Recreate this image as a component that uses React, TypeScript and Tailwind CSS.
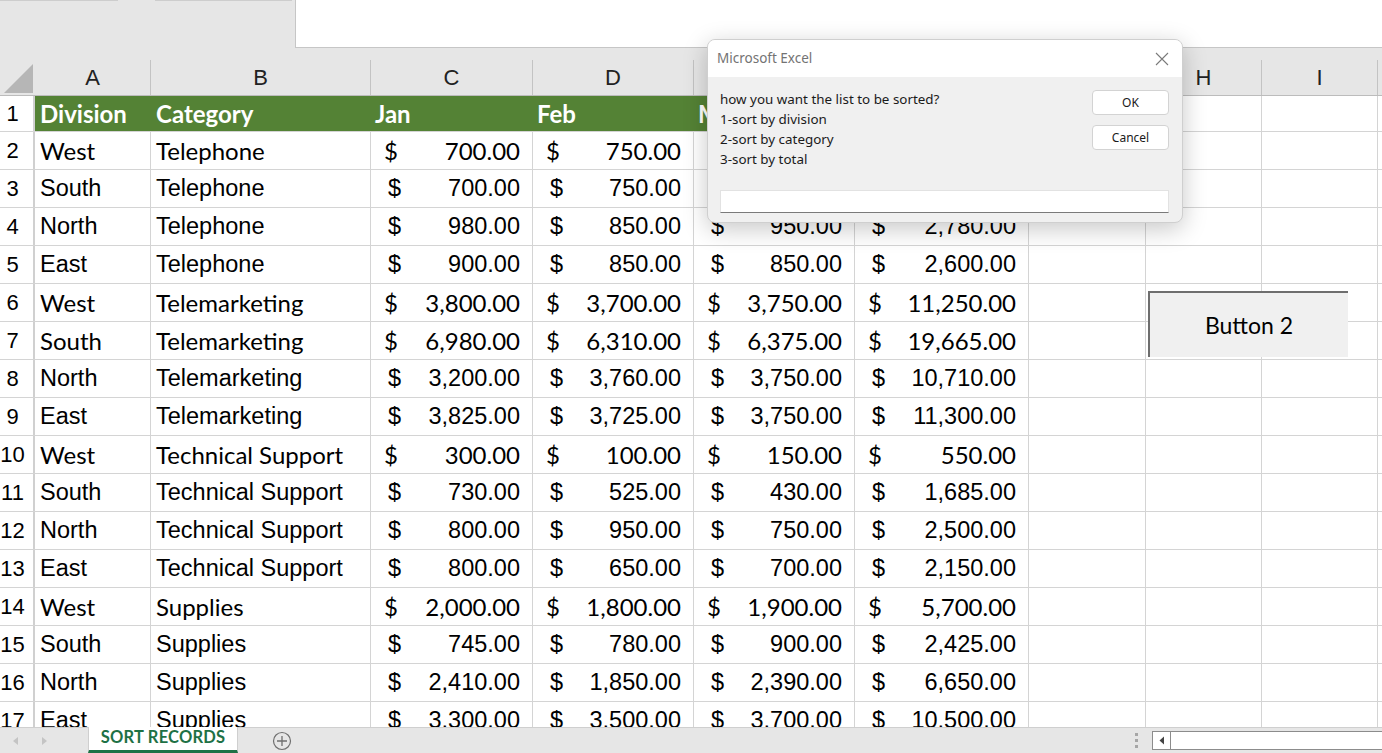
import React from 'react';

// column widths in px (border included)
const COLS = [
  { key: 'A', w: 'w-[116px]' },
  { key: 'B', w: 'w-[220px]' },
  { key: 'C', w: 'w-[162px]' },
  { key: 'D', w: 'w-[161px]' },
  { key: 'E', w: 'w-[161px]' },
  { key: 'F', w: 'w-[174px]' },
  { key: 'G', w: 'w-[117px]' },
  { key: 'H', w: 'w-[116px]' },
  { key: 'I', w: 'w-[116px]' },
];

type Row = { n: number; div: string; cat: string; vals: string[]; calibri?: boolean };

const rows: Row[] = [
  { n: 2, div: 'West', cat: 'Telephone', vals: ['700.00', '750.00', '650.00', '2,100.00'], calibri: true },
  { n: 3, div: 'South', cat: 'Telephone', vals: ['700.00', '750.00', '800.00', '2,250.00'] },
  { n: 4, div: 'North', cat: 'Telephone', vals: ['980.00', '850.00', '950.00', '2,780.00'] },
  { n: 5, div: 'East', cat: 'Telephone', vals: ['900.00', '850.00', '850.00', '2,600.00'] },
  { n: 6, div: 'West', cat: 'Telemarketing', vals: ['3,800.00', '3,700.00', '3,750.00', '11,250.00'], calibri: true },
  { n: 7, div: 'South', cat: 'Telemarketing', vals: ['6,980.00', '6,310.00', '6,375.00', '19,665.00'], calibri: true },
  { n: 8, div: 'North', cat: 'Telemarketing', vals: ['3,200.00', '3,760.00', '3,750.00', '10,710.00'] },
  { n: 9, div: 'East', cat: 'Telemarketing', vals: ['3,825.00', '3,725.00', '3,750.00', '11,300.00'] },
  { n: 10, div: 'West', cat: 'Technical Support', vals: ['300.00', '100.00', '150.00', '550.00'], calibri: true },
  { n: 11, div: 'South', cat: 'Technical Support', vals: ['730.00', '525.00', '430.00', '1,685.00'] },
  { n: 12, div: 'North', cat: 'Technical Support', vals: ['800.00', '950.00', '750.00', '2,500.00'] },
  { n: 13, div: 'East', cat: 'Technical Support', vals: ['800.00', '650.00', '700.00', '2,150.00'] },
  { n: 14, div: 'West', cat: 'Supplies', vals: ['2,000.00', '1,800.00', '1,900.00', '5,700.00'], calibri: true },
  { n: 15, div: 'South', cat: 'Supplies', vals: ['745.00', '780.00', '900.00', '2,425.00'] },
  { n: 16, div: 'North', cat: 'Supplies', vals: ['2,410.00', '1,850.00', '2,390.00', '6,650.00'] },
  { n: 17, div: 'East', cat: 'Supplies', vals: ['3,300.00', '3,500.00', '3,700.00', '10,500.00'] },
];

const ARIAL = "font-['Liberation_Sans',Arial,sans-serif] text-[23.5px]";
const CALIBRI = "font-['Lato',sans-serif] text-[24px]";
const CELL = 'h-full shrink-0 border-r border-[#d4d4d4] flex items-center overflow-hidden whitespace-nowrap';

const RowNum: React.FC<{ n: number }> = ({ n }) => (
  <div className="w-[35px] h-full shrink-0 border-r-2 border-[#d0d0d0] flex items-center font-['Liberation_Sans',Arial,sans-serif] text-[22px] text-black">
    <span className="w-[25px] text-center">{n}</span>
  </div>
);

const Money: React.FC<{ v: string; w: string; calibri?: boolean }> = ({ v, w, calibri }) => (
  <div className={`${CELL} ${w} justify-between pr-[12px] ${calibri ? 'pl-[13px]' : 'pl-[17px]'}`}>
    <span>$</span>
    <span>{v}</span>
  </div>
);

const Dialog: React.FC = () => (
  <div className="absolute left-[707px] top-[39px] w-[476px] h-[184px] rounded-[8px] overflow-hidden border border-[#cfcfcf] bg-[#f0f0f0] shadow-[0_6px_24px_rgba(0,0,0,0.22)] font-['Noto_Sans',sans-serif]">
    <div className="h-[37px] bg-white flex items-center justify-between pl-[9px] pr-[13px]">
      <span className="text-[13.5px] text-[#737373]">Microsoft Excel</span>
      <svg width="14" height="14" viewBox="0 0 14 14">
        <path d="M1 1 L13 13 M13 1 L1 13" stroke="#7a7a7a" strokeWidth="1.1" />
      </svg>
    </div>
    <div className="flex pl-[12px] pr-[13px] pt-[13px]">
      <div className="flex-1 text-[13.4px] leading-[20px] text-[#1a1a1a] -mt-[1px]">
        <div>how you want the list to be sorted?</div>
        <div>1-sort by division</div>
        <div>2-sort by category</div>
        <div>3-sort by total</div>
      </div>
      <div className="flex flex-col gap-[10px]">
        <button className="w-[77px] h-[25px] bg-white border border-[#d3d3d3] rounded-[4px] text-[12px] text-[#1a1a1a]">OK</button>
        <button className="w-[77px] h-[25px] bg-white border border-[#d3d3d3] rounded-[4px] text-[12px] text-[#1a1a1a]">Cancel</button>
      </div>
    </div>
    <div className="mt-[21px] ml-[12px] mr-[13px] h-[23px] bg-white border border-[#e2e2e2] border-b-[#7a7a7a]" />
  </div>
);

export default function App() {
  return (
    <div className="relative w-[1382px] h-[753px] overflow-hidden bg-white flex flex-col text-black">
      {/* top strip */}
      <div className="h-[48px] shrink-0 flex bg-[#e6e6e6]">
        <div className="w-[295px] relative">
          <div className="absolute top-0 left-0 w-[118px] h-[1px] bg-[#cdcdcd]" />
          <div className="absolute top-0 left-[155px] w-[137px] h-[1px] bg-[#cdcdcd]" />
        </div>
        <div className="flex-1 bg-white border-l border-b border-[#c6c6c6]" />
      </div>

      {/* column header */}
      <div className="h-[48px] shrink-0 bg-[#e6e6e6] flex items-end border-b border-[#bcbcbc]">
        <div className="w-[35px] h-[36px] shrink-0 flex items-end justify-end pr-[2px] pb-[2px]">
          <svg width="29" height="29" viewBox="0 0 29 29">
            <polygon points="0,29 29,29 29,0" fill="#b6b6b6" />
          </svg>
        </div>
        {COLS.map((c) => (
          <div
            key={c.key}
            className={`${c.w} h-[35px] shrink-0 border-r border-[#c3c3c3] flex items-center justify-center font-['Liberation_Sans',Arial,sans-serif] text-[22px] text-[#222]`}
          >
            {c.key}
          </div>
        ))}
        <div className="flex-1 h-[35px]" />
      </div>

      {/* grid */}
      <div className="flex-1 overflow-hidden">
        <div className="h-[36px] flex border-b border-[#d4d4d4]">
          <RowNum n={1} />
          <div className="flex bg-[#548235] text-white font-['Lato',sans-serif] font-bold text-[24px]">
            <div className="w-[116px] h-full flex items-center pl-[5px]">Division</div>
            <div className="w-[220px] h-full flex items-center pl-[5px]">Category</div>
            <div className="w-[162px] h-full flex items-center pl-[4px]">Jan</div>
            <div className="w-[161px] h-full flex items-center pl-[4px]">Feb</div>
            <div className="w-[161px] h-full flex items-center pl-[4px]">Mar</div>
            <div className="w-[174px] h-full flex items-center pl-[4px]">Total</div>
          </div>
          <div className={`${CELL} w-[117px]`} />
          <div className={`${CELL} w-[116px]`} />
          <div className={`${CELL} w-[116px]`} />
        </div>
        {rows.map((r) => (
          <div key={r.n} className={`h-[38px] flex border-b border-[#d4d4d4] ${r.calibri ? CALIBRI : ARIAL}`}>
            <RowNum n={r.n} />
            <div className={`${CELL} w-[116px] pl-[5px]`}>{r.div}</div>
            <div className={`${CELL} w-[220px] pl-[5px]`}>{r.cat}</div>
            <Money v={r.vals[0]} w="w-[162px]" calibri={r.calibri} />
            <Money v={r.vals[1]} w="w-[161px]" calibri={r.calibri} />
            <Money v={r.vals[2]} w="w-[161px]" calibri={r.calibri} />
            <Money v={r.vals[3]} w="w-[174px]" calibri={r.calibri} />
            <div className={`${CELL} w-[117px]`} />
            <div className={`${CELL} w-[116px]`} />
            <div className={`${CELL} w-[116px]`} />
          </div>
        ))}
      </div>

      {/* sheet tabs bar */}
      <div className="h-[26px] shrink-0 bg-[#e6e6e6] border-t border-[#cfcfcf] flex items-stretch">
        <div className="w-[88px] flex items-center gap-[20px] pl-[12px]">
          <svg width="8" height="10" viewBox="0 0 8 10"><polygon points="6,1 1,5 6,9" fill="#c4c4c4" /></svg>
          <svg width="8" height="10" viewBox="0 0 8 10"><polygon points="2,1 7,5 2,9" fill="#c4c4c4" /></svg>
        </div>
        <div className="w-[150px] -mt-[1px] pb-[2px] bg-white border-x border-[#cfcfcf] border-b-[3px] border-b-[#1e7145] flex items-center justify-center font-['Lato',sans-serif] font-bold text-[16.5px] text-[#1e7145] tracking-[0.2px]">
          SORT RECORDS
        </div>
        <div className="w-[88px] flex items-center justify-center">
          <svg width="20" height="20" viewBox="0 0 20 20">
            <circle cx="10" cy="10" r="8.5" fill="none" stroke="#6f6f6f" strokeWidth="1.2" />
            <path d="M10 5 V15 M5 10 H15" stroke="#6f6f6f" strokeWidth="1.3" />
          </svg>
        </div>
        <div className="flex-1 flex items-center justify-end">
          <div className="flex flex-col gap-[3px] mr-[14px]">
            <div className="w-[3px] h-[3px] bg-[#a6a6a6]" />
            <div className="w-[3px] h-[3px] bg-[#a6a6a6]" />
            <div className="w-[3px] h-[3px] bg-[#a6a6a6]" />
          </div>
          <div className="w-[230px] h-[19px] bg-white border border-[#8c8c8c] border-r-0 flex">
            <div className="w-[18px] h-full border-r border-[#8c8c8c] flex items-center justify-center">
              <svg width="6" height="9" viewBox="0 0 6 9"><polygon points="5,0.5 0.5,4.5 5,8.5" fill="#444" /></svg>
            </div>
          </div>
        </div>
      </div>

      {/* form button over the sheet */}
      <div className="absolute left-[1148px] top-[291px] w-[200px] h-[66px] bg-[#f0f0f0] border-l-2 border-t-2 border-[#6e6e6e] flex items-center justify-center font-['Lato',sans-serif] text-[23px] text-black">
        Button 2
      </div>

      <Dialog />
    </div>
  );
}
